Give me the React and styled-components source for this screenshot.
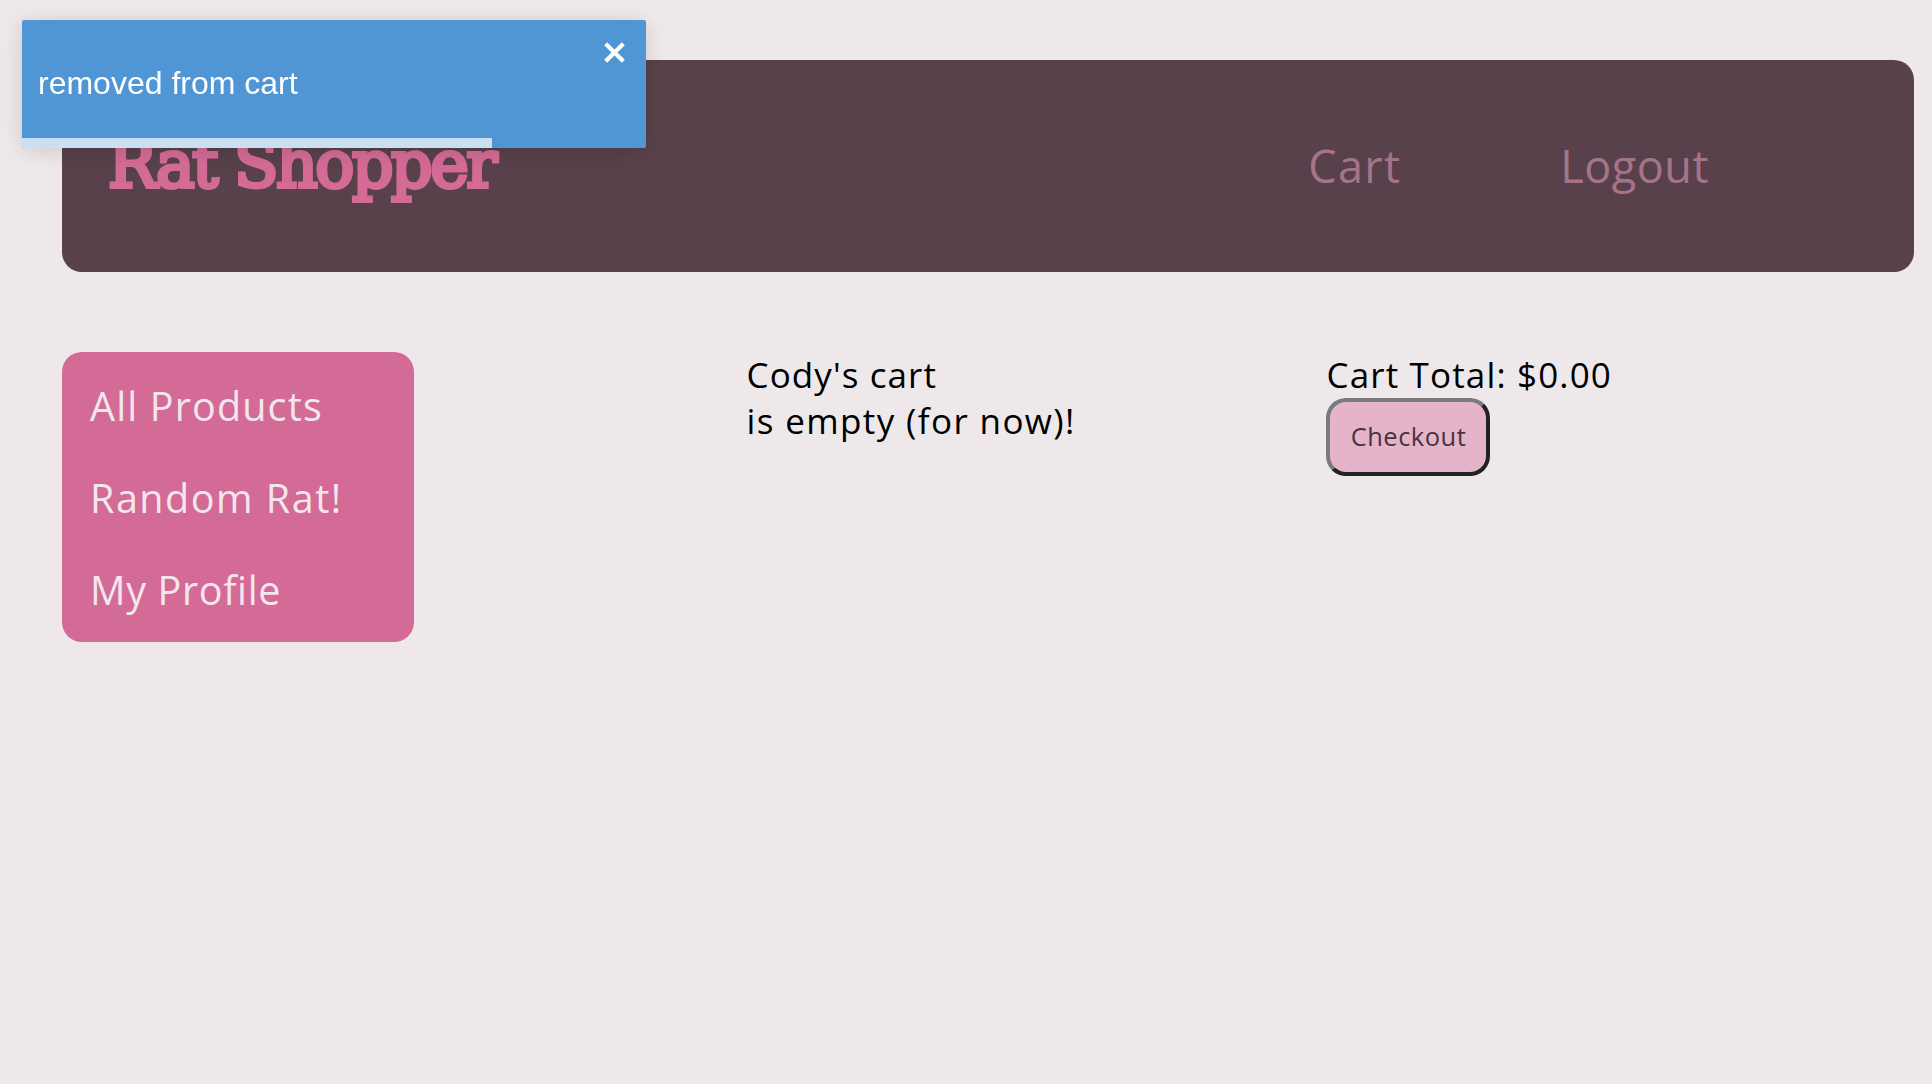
import React from "react";
import styled, { createGlobalStyle } from "styled-components";

const GlobalStyle = createGlobalStyle`
  * { box-sizing: border-box; }
  body {
    margin: 0;
    background: #eee8ea;
    color: #000;
    font-family: "Open Sans", "Noto Sans", sans-serif;
  }
`;

const Page = styled.div`
  min-height: 1084px;
  padding: 60px 18px 0 62px;
`;

const Header = styled.header`
  display: flex;
  align-items: center;
  justify-content: space-between;
  height: 212px;
  padding: 0 205px 0 46px;
  border-radius: 20px;
  background: #58414a;
`;

const Logo = styled.h1`
  margin: 0;
  padding-bottom: 2px;
  color: #d36b96;
  font: 400 65px/80px "DejaVu Serif", serif;
  letter-spacing: -2.5px;
  -webkit-text-stroke: 4px #d36b96;
  stroke-linejoin: round;
  paint-order: stroke fill;
  white-space: nowrap;
`;

const Nav = styled.nav`
  display: flex;
  gap: 159px;
`;

const NavLink = styled.a`
  color: #a5748a;
  font-size: 45px;
  line-height: 56px;
  letter-spacing: ${(p) => p.$spacing}px;
`;

const Main = styled.main`
  display: grid;
  grid-template-columns: 684px 580px 1fr;
  align-items: start;
  margin-top: 80px;
`;

const Sidebar = styled.aside`
  display: flex;
  flex-direction: column;
  gap: 36px;
  width: 352px;
  height: 290px;
  padding: 26px 28px;
  border-radius: 20px;
  background: #d36b96;
`;

const SideLink = styled.a`
  color: #f3e6ec;
  font-size: 39.5px;
  line-height: 56px;
  letter-spacing: ${(p) => p.$spacing}px;
  white-space: nowrap;
`;

const Line = styled.div`
  padding-left: 0.5px;
  font-size: 35px;
  line-height: 46px;
  letter-spacing: ${(p) => p.$spacing}px;
  white-space: nowrap;
`;

const Checkout = styled.button`
  display: block;
  width: 164px;
  height: 78px;
  padding: 0 0 2px 1px;
  border: 4px solid;
  border-color: #7a7a7a #222 #222 #7a7a7a;
  border-radius: 20px;
  background: #e6b4ca;
  color: #47343c;
  font: 25.5px "Open Sans", "Noto Sans", sans-serif;
  letter-spacing: 0.5px;
`;

const Toast = styled.div`
  position: fixed;
  top: 20px;
  left: 22px;
  display: flex;
  align-items: center;
  width: 624px;
  height: 128px;
  padding: 0 16px 2px;
  border-radius: 2px;
  background: #5096d5;
  color: #fff;
  font: 32px "Liberation Sans", Arial, sans-serif;
  box-shadow: 0 2px 20px rgba(0, 0, 0, 0.1), 0 4px 30px rgba(0, 0, 0, 0.05);
  overflow: hidden;
`;

const CloseIcon = styled.svg`
  position: absolute;
  top: 22px;
  right: 21px;
  width: 21px;
  height: 21px;
`;

const Progress = styled.div`
  position: absolute;
  left: 0;
  bottom: 0;
  width: 470px;
  height: 10px;
  background: #cbdff3;
`;

export default function App() {
  return (
    <>
      <GlobalStyle />
      <Page>
        <Header>
          <Logo>Rat Shopper</Logo>
          <Nav>
            <NavLink $spacing={1.3}>Cart</NavLink>
            <NavLink $spacing={0.5}>Logout</NavLink>
          </Nav>
        </Header>
        <Main>
          <Sidebar>
            <SideLink $spacing={1.15}>All Products</SideLink>
            <SideLink $spacing={1.5}>Random Rat!</SideLink>
            <SideLink $spacing={0.65}>My Profile</SideLink>
          </Sidebar>
          <section>
            <Line $spacing={1.1}>Cody's cart</Line>
            <Line $spacing={1.38}>is empty (for now)!</Line>
          </section>
          <section>
            <Line $spacing={1.15}>Cart Total: $0.00</Line>
            <Checkout>Checkout</Checkout>
          </section>
        </Main>
      </Page>
      <Toast>
        removed from cart
        <CloseIcon viewBox="0 0 21 21" fill="none" stroke="#fff" strokeWidth="4.2">
          <path d="M1.7 1.7 19.3 19.3M19.3 1.7 1.7 19.3" />
        </CloseIcon>
        <Progress />
      </Toast>
    </>
  );
}
